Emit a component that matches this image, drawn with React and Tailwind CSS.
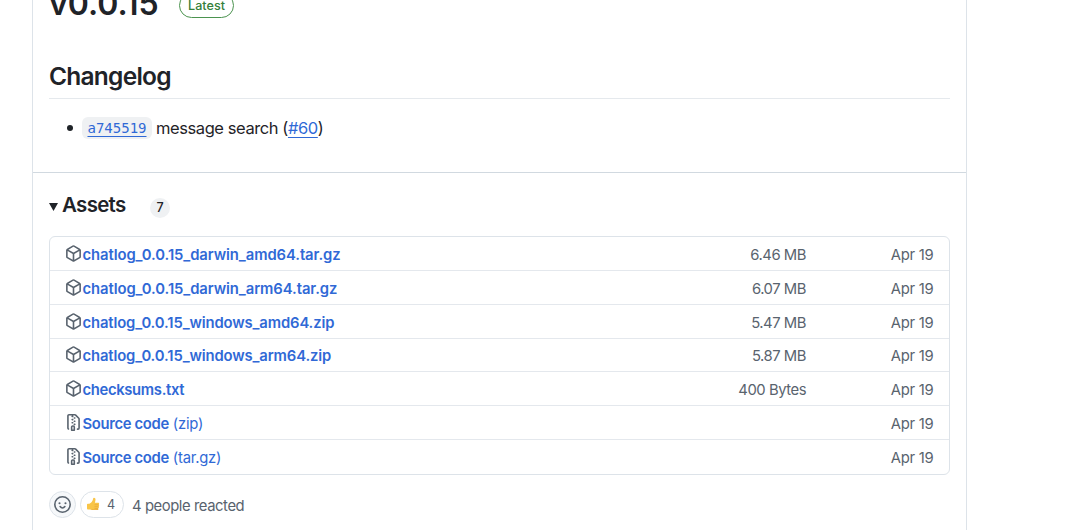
const PackageIcon = () => (
  <svg viewBox="0 0 16 16" className="h-[17px] w-[17px] shrink-0 fill-[#59636e]">
    <path d="m8.878.392 5.25 3.045c.54.314.872.89.872 1.514v6.098a1.75 1.75 0 0 1-.872 1.514l-5.25 3.045a1.75 1.75 0 0 1-1.756 0l-5.25-3.045A1.75 1.75 0 0 1 1 11.049V4.951c0-.624.332-1.201.872-1.514L7.122.392a1.75 1.75 0 0 1 1.756 0ZM7.875 1.69l-4.63 2.685L8 7.133l4.755-2.758-4.63-2.685a.248.248 0 0 0-.25 0ZM2.5 5.677v5.372c0 .09.047.171.125.216l4.625 2.683V8.432Zm6.25 8.271 4.625-2.683a.25.25 0 0 0 .125-.216V5.677L8.75 8.432Z" />
  </svg>
);

const ZipIcon = () => (
  <svg viewBox="0 0 16 16" className="h-[17px] w-[17px] shrink-0 fill-[#59636e]">
    <path d="M3.5 1.75v11.5c0 .09.048.173.126.217a.75.75 0 0 1-.752 1.298A1.748 1.748 0 0 1 2 13.25V1.75C2 .784 2.784 0 3.75 0h5.586c.464 0 .909.185 1.237.513l2.914 2.914c.329.328.513.773.513 1.237v8.586A1.75 1.75 0 0 1 12.25 15h-.5a.75.75 0 0 1 0-1.5h.5a.25.25 0 0 0 .25-.25V4.664a.25.25 0 0 0-.073-.177L9.513 1.573a.25.25 0 0 0-.177-.073H7.25a.75.75 0 0 1 0 1.5h-.5a.75.75 0 0 1 0-1.5h-3a.25.25 0 0 0-.25.25Zm3.75 8.75h.5c.966 0 1.75.784 1.75 1.75v3a.75.75 0 0 1-.75.75h-2.5a.75.75 0 0 1-.75-.75v-3c0-.966.784-1.75 1.75-1.75ZM6 5.25a.75.75 0 0 1 .75-.75h.5a.75.75 0 0 1 0 1.5h-.5A.75.75 0 0 1 6 5.25Zm.75 2.25h.5a.75.75 0 0 1 0 1.5h-.5a.75.75 0 0 1 0-1.5ZM8 6.75A.75.75 0 0 1 8.75 6h.5a.75.75 0 0 1 0 1.5h-.5A.75.75 0 0 1 8 6.75ZM8.75 3h.5a.75.75 0 0 1 0 1.5h-.5a.75.75 0 0 1 0-1.5ZM8 9.75A.75.75 0 0 1 8.75 9h.5a.75.75 0 0 1 0 1.5h-.5A.75.75 0 0 1 8 9.75Zm-1 2.5v2.25h1v-2.25a.25.25 0 0 0-.25-.25h-.5a.25.25 0 0 0-.25.25Z" />
  </svg>
);

const SmileyIcon = () => (
  <svg viewBox="0 0 16 16" className="h-[17px] w-[17px]" fill="none" stroke="#59636e" strokeWidth="1.5" strokeLinecap="round">
    <circle cx="8" cy="8" r="7.25" />
    <path d="M5.75 9.95c.5.65 1.25 1.3 2.25 1.3s1.75-.65 2.25-1.3" />
    <circle cx="5.2" cy="6.8" r="1" fill="#59636e" stroke="none" />
    <circle cx="10.8" cy="6.8" r="1" fill="#59636e" stroke="none" />
  </svg>
);

const ThumbIcon = () => (
  <svg viewBox="0 0 14 14" className="h-[14px] w-[14px]">
    <path d="M1 7.600c0-.5.300-.9.800-.9h1.600C5 6 6.300 4.300 6.800 2.900c.3-.8.200-2.100 1.200-2.100 1.300 0 1.700 1.300 1.400 2.600L8.900 5.700h3.100c1.300 0 1.500 1.500.6 1.900.8.400.7 1.700 0 2 .5.500.3 1.600-.4 1.800.3.900-.2 1.700-1 1.700H7.300c-1.500 0-2.200-.6-3.200-.6H1.800c-.5 0-.8-.4-.8-.9Z" fill="#f9c548" />
    <path d="M8.500 7.700h4M8.500 9.700h4M8.500 11.500h3.500" stroke="#dc9a32" strokeWidth=".5" fill="none" />
    <path d="M4 12.300c1.200.1 1.800.8 3.300.8h4c.8 0 1.100-.6 1-1.200-2 .6-5.800.6-8.300.4Z" fill="#e9ab3c" />
  </svg>
);

const assets = [
  { name: "chatlog_0.0.15_darwin_amd64.tar.gz", size: "6.46 MB", nameTracking: "tracking-[-0.07px]" },
  { name: "chatlog_0.0.15_darwin_arm64.tar.gz", size: "6.07 MB", nameTracking: "tracking-[-0.07px]" },
  { name: "chatlog_0.0.15_windows_amd64.zip", size: "5.47 MB", nameTracking: "tracking-[-0.12px]" },
  { name: "chatlog_0.0.15_windows_arm64.zip", size: "5.87 MB", nameTracking: "tracking-[-0.12px]" },
  { name: "checksums.txt", size: "400 Bytes", nameTracking: "tracking-[-0.33px]" },
  { name: "Source code", suffix: "(zip)", nameTracking: "tracking-[-0.33px]" },
  { name: "Source code", suffix: "(tar.gz)", nameTracking: "tracking-[-0.33px]" },
];

export default function App() {
  return (
    <main className="h-[530px] overflow-hidden bg-white pl-8 font-['Inter',sans-serif] text-[#1f2328]">
      <article className="h-[530px] w-[935px] border-x border-[#dde3e9]">
        <div className="h-[173px] overflow-hidden border-b border-[#d1d9e0] px-4">
          <header className="-mt-[18px] flex h-[44px] items-center">
            <h1 className="-mt-px w-[130px] text-[32px] leading-[44px] font-semibold">v0.0.15</h1>
            <span className="mt-[3px] flex h-[25px] w-[55px] items-center justify-center rounded-full border border-[#4b934f] pt-[2px] text-[12.6px] font-medium text-[#35803b]">
              Latest
            </span>
          </header>
          <h2 className="mt-[32px] h-[41px] border-b border-[#e5e9ed] text-[24.5px] leading-[36px] font-semibold tracking-[-0.75px]">Changelog</h2>
          <ul className="mt-[16px] flex h-[26px] items-center text-[16.5px]">
            <li className="flex items-center">
              <span className="mr-[9px] ml-[18px] h-[6px] w-[6px] rounded-full bg-[#1f2328]" />
              <code className="flex h-[22px] w-[70px] items-center justify-center rounded-md bg-[#eff1f3] pt-px font-['DejaVu_Sans_Mono',monospace] text-[14px] text-[#3069d6] underline underline-offset-[3px]">
                a745519
              </code>
              <span className="ml-[4px] tracking-[-0.42px]">
                message search (<a className="text-[#3069d6] underline underline-offset-[3px]">#60</a>)
              </span>
            </li>
          </ul>
        </div>
        <section className="px-4 pt-[17px]">
          <div className="flex h-[30px] items-center">
            <svg viewBox="0 0 9 8" className="mt-[4px] h-[8px] w-[9px] fill-[#1f2328]">
              <path d="M0 0h9L4.500 8Z" />
            </svg>
            <h3 className="ml-[4px] w-[88px] text-[20.5px] font-semibold tracking-[-0.7px]">Assets</h3>
            <span className="mt-[6px] flex h-[20px] w-[20px] items-center justify-center rounded-full bg-[#eff1f3] text-[12.6px] font-medium">7</span>
          </div>
          <ul className="mt-[16px] h-[239px] overflow-hidden rounded-md border border-[#dde3e9] text-[14.8px]">
            {assets.map((asset, i) => (
              <li key={i} className="flex h-[33.85px] items-center border-b border-[#e4e8ed] pr-[15.5px] pl-[15px] last:border-b-0">
                {asset.size ? <PackageIcon /> : <ZipIcon />}
                <a className="mt-[3px] ml-[0.5px] flex-1 font-semibold text-[#3069d6]">
                  <span className={asset.nameTracking}>{asset.name}</span>
                  {asset.suffix && <span className="font-normal tracking-[-0.22px]"> {asset.suffix}</span>}
                </a>
                <span className="mt-[3px] tracking-[-0.45px] text-[#59636e]">{asset.size}</span>
                <span className="mt-[3px] w-[127.5px] text-right tracking-[-0.25px] text-[#59636e]">Apr 19</span>
              </li>
            ))}
          </ul>
          <footer className="mt-[15px] flex h-[28px] items-center text-[14.8px] text-[#59636e]">
            <button className="flex h-[27px] w-[27px] items-center justify-center rounded-full border border-[#dde3e9] bg-[#f6f8fa]">
              <SmileyIcon />
            </button>
            <button className="ml-[4px] flex h-[27px] w-[44px] items-center rounded-full border border-[#dde3e9] pl-[5px] text-[12.6px]">
              <ThumbIcon />
              <span className="mt-[2px] ml-[7px]">4</span>
            </button>
            <span className="mt-[4px] ml-[8px] tracking-[-0.42px]">4 people reacted</span>
          </footer>
        </section>
      </article>
    </main>
  );
}
